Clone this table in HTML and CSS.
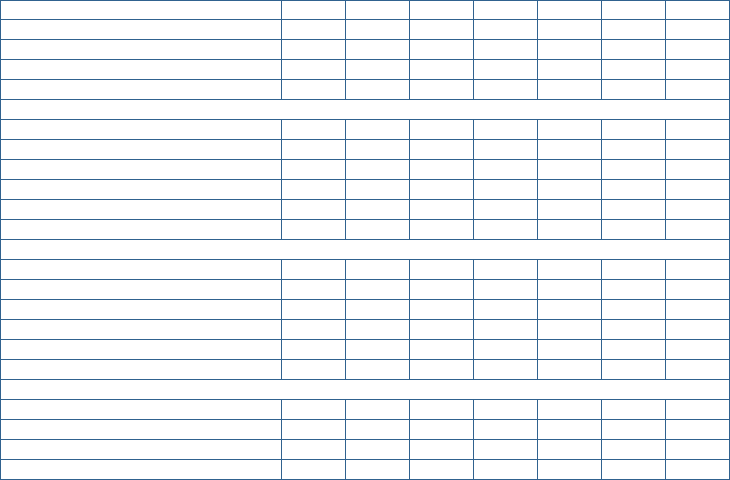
FILE: index.html
```html
<!DOCTYPE html>
<html>
<head>
<meta charset="utf-8">
<link rel="stylesheet" href="styles.css">
</head>
<body>
<table class="grid">
  <colgroup>
    <col class="c-name">
    <col class="c-val"><col class="c-val"><col class="c-val"><col class="c-val"><col class="c-val"><col class="c-val"><col class="c-val">
  </colgroup>
  <tbody>
    <tr class="first"><td></td><td></td><td></td><td></td><td></td><td></td><td></td><td></td></tr>
    <tr><td></td><td></td><td></td><td></td><td></td><td></td><td></td><td></td></tr>
    <tr><td></td><td></td><td></td><td></td><td></td><td></td><td></td><td></td></tr>
    <tr><td></td><td></td><td></td><td></td><td></td><td></td><td></td><td></td></tr>
    <tr><td></td><td></td><td></td><td></td><td></td><td></td><td></td><td></td></tr>
    <tr class="section"><td colspan="8"></td></tr>
    <tr><td></td><td></td><td></td><td></td><td></td><td></td><td></td><td></td></tr>
    <tr><td></td><td></td><td></td><td></td><td></td><td></td><td></td><td></td></tr>
    <tr><td></td><td></td><td></td><td></td><td></td><td></td><td></td><td></td></tr>
    <tr><td></td><td></td><td></td><td></td><td></td><td></td><td></td><td></td></tr>
    <tr><td></td><td></td><td></td><td></td><td></td><td></td><td></td><td></td></tr>
    <tr><td></td><td></td><td></td><td></td><td></td><td></td><td></td><td></td></tr>
    <tr class="section"><td colspan="8"></td></tr>
    <tr><td></td><td></td><td></td><td></td><td></td><td></td><td></td><td></td></tr>
    <tr><td></td><td></td><td></td><td></td><td></td><td></td><td></td><td></td></tr>
    <tr><td></td><td></td><td></td><td></td><td></td><td></td><td></td><td></td></tr>
    <tr><td></td><td></td><td></td><td></td><td></td><td></td><td></td><td></td></tr>
    <tr><td></td><td></td><td></td><td></td><td></td><td></td><td></td><td></td></tr>
    <tr><td></td><td></td><td></td><td></td><td></td><td></td><td></td><td></td></tr>
    <tr class="section"><td colspan="8"></td></tr>
    <tr><td></td><td></td><td></td><td></td><td></td><td></td><td></td><td></td></tr>
    <tr><td></td><td></td><td></td><td></td><td></td><td></td><td></td><td></td></tr>
    <tr><td></td><td></td><td></td><td></td><td></td><td></td><td></td><td></td></tr>
    <tr><td></td><td></td><td></td><td></td><td></td><td></td><td></td><td></td></tr>
  </tbody>
</table>
</body>
</html>
```
FILE: styles.css
```css
html, body {
  margin: 0;
  padding: 0;
  background: #ffffff;
  font-family: "Liberation Sans", Arial, sans-serif;
}

.grid {
  width: 730px;
  border-collapse: collapse;
  table-layout: fixed;
  border: 1px solid #30628f;
}

.c-name { width: 281px; }
.c-val { width: 64px; }

.grid td {
  border: 1px solid #30628f;
  height: 19px;
  padding: 0;
}

.grid tr.first td {
  height: 18px;
}
```
